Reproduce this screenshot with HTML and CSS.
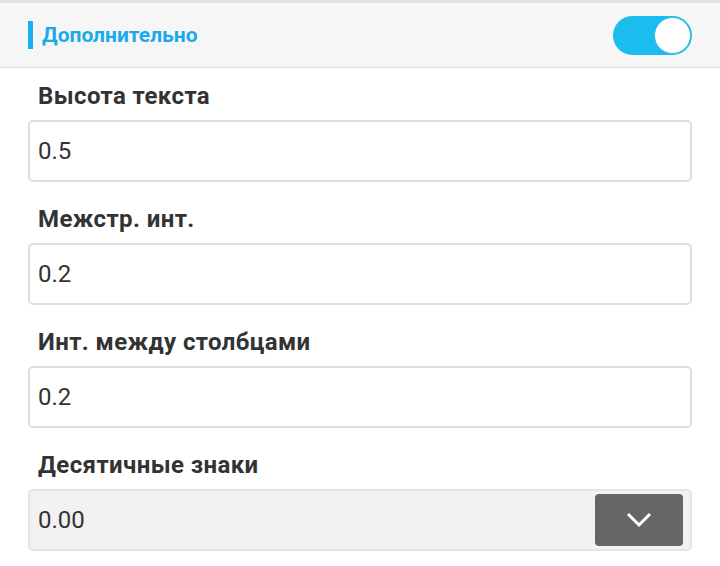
FILE: index.html
```html
<!DOCTYPE html>
<html lang="ru">
<head>
  <meta charset="UTF-8" />
  <meta name="viewport" content="width=device-width, initial-scale=1.0"/>
  <title>Дополнительно</title>
  <link rel="stylesheet" href="styles.css">
</head>
<body>

  <div class="panel-head">
    <span class="panel-title">Дополнительно</span>
    <label class="toggle">
      <input type="checkbox" checked />
      <span class="toggle-track"><span class="toggle-knob"></span></span>
    </label>
  </div>

  <div class="fields">
    <div class="field">
      <label for="textHeight">Высота текста</label>
      <input type="text" id="textHeight" class="text-input" value="0.5" />
    </div>

    <div class="field">
      <label for="lineSpacing">Межстр. инт.</label>
      <input type="text" id="lineSpacing" class="text-input" value="0.2" />
    </div>

    <div class="field">
      <label for="colSpacing">Инт. между столбцами</label>
      <input type="text" id="colSpacing" class="text-input" value="0.2" />
    </div>

    <div class="field">
      <label>Десятичные знаки</label>
      <div class="select">
        <span class="select-value">0.00</span>
        <button class="select-btn" type="button">
          <svg width="26" height="16" viewBox="0 0 26 16">
            <polyline points="2,2 13,13 24,2" fill="none" stroke="#fff" stroke-width="3" />
          </svg>
        </button>
      </div>
    </div>
  </div>

</body>
</html>
```

FILE: styles.css
```css
body {
  font-family: Roboto, "Noto Sans", sans-serif;
  background: #fff;
  color: #333;
  margin: 0;
}

.panel-head {
  display: flex;
  align-items: center;
  justify-content: space-between;
  height: 64px;
  padding: 0 28px;
  background: #f6f6f6;
  border-top: 3px solid #e2e2e2;
  border-bottom: 1px solid #dddddd;
}

.panel-title {
  border-left: 5px solid #1ab0f5;
  padding-left: 9px;
  font-size: 21px;
  font-weight: bold;
  line-height: 28px;
  color: #1ca9ec;
}

.toggle input {
  display: none;
}

.toggle-track {
  display: block;
  width: 79px;
  height: 39px;
  border-radius: 20px;
  background: #1bbdee;
  position: relative;
}

.toggle-knob {
  position: absolute;
  top: 1px;
  right: 1px;
  width: 35px;
  height: 35px;
  border-radius: 50%;
  background: #fff;
  border: 1px solid #3cb8e8;
}

.fields {
  display: flex;
  flex-direction: column;
  gap: 23px;
  padding: 14px 28px 0 28px;
}

.field {
  display: flex;
  flex-direction: column;
  gap: 10px;
}

.field label {
  font-size: 24px;
  font-weight: bold;
  line-height: 28px;
  letter-spacing: 0.4px;
  padding-left: 10px;
  color: #333;
}

.text-input {
  box-sizing: border-box;
  width: 100%;
  height: 62px;
  margin: 0;
  padding: 0 8px;
  border: 2px solid #dedede;
  border-radius: 5px;
  font-family: Roboto, "Noto Sans", sans-serif;
  font-size: 24px;
  color: #333;
  background: #fff;
  outline: none;
}

.select {
  box-sizing: border-box;
  display: flex;
  align-items: center;
  justify-content: space-between;
  height: 62px;
  padding: 3px 7px 3px 8px;
  border: 2px solid #e4e4e4;
  border-radius: 5px;
  background: #f2f2f2;
}

.select-value {
  font-size: 24px;
  color: #333;
}

.select-btn {
  display: flex;
  align-items: center;
  justify-content: center;
  width: 88px;
  height: 52px;
  padding: 0;
  border: none;
  border-radius: 4px;
  background: #666666;
}
```
